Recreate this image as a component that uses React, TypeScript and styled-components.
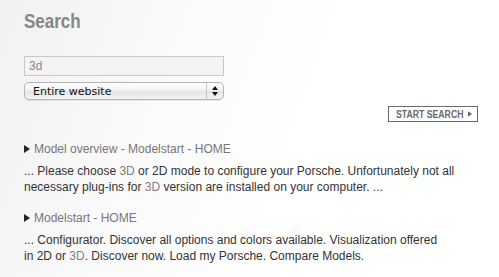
import styled, { createGlobalStyle } from "styled-components";

const GlobalStyle = createGlobalStyle`
  html, body {
    margin: 0;
    padding: 0;
  }
  body {
    width: 499px;
    height: 277px;
    overflow: hidden;
    background: linear-gradient(110deg, #f1f1f1 0%, #fbfbfb 35%, #ffffff 60%);
    font-family: "Liberation Sans", Arial, sans-serif;
  }
`;

const Page = styled.div`
  padding: 8px 21px 0 24px;
`;

const Title = styled.h1`
  margin: 0;
  height: 26px;
  line-height: 26px;
  display: inline-block;
  transform: scaleX(0.85);
  transform-origin: left center;
  font-family: "Liberation Sans", Arial, sans-serif;
  font-size: 20px;
  font-weight: bold;
  color: #878787;
`;

const Form = styled.form`
  margin-top: 22px;
  display: flex;
  flex-direction: column;
`;

const Field = styled.input`
  box-sizing: border-box;
  width: 200px;
  height: 20px;
  margin: 0;
  padding: 0 4px;
  border: 1px solid #c8c8c8;
  background: #f3f3f3;
  font-family: "Liberation Sans", Arial, sans-serif;
  font-size: 12px;
  color: #888;
  outline: none;
`;

const Select = styled.div`
  box-sizing: border-box;
  position: relative;
  width: 200px;
  height: 18px;
  margin-top: 6px;
  display: flex;
  align-items: center;
  padding-left: 8px;
  border: 1px solid #b4b4b4;
  border-radius: 5px;
  background: linear-gradient(#ffffff, #f1f1f1 50%, #e4e4e4 51%, #f4f4f4);
  box-shadow: 0 1px 0 rgba(0, 0, 0, 0.08);
  font-family: "DejaVu Sans", "Liberation Sans", sans-serif;
  font-size: 11px;
  color: #111;
`;

const Stepper = styled.span`
  position: absolute;
  right: 0;
  top: 0;
  bottom: 0;
  width: 16px;
  border-left: 1px solid #c6c6c6;
  display: flex;
  align-items: center;
  justify-content: center;
`;

const Actions = styled.div`
  display: flex;
  justify-content: flex-end;
  margin-top: 6px;
`;

const SubmitButton = styled.button`
  box-sizing: border-box;
  height: 16px;
  width: 90px;
  margin: 0;
  padding: 0 0 0 7px;
  display: flex;
  align-items: center;
  white-space: nowrap;
  overflow: hidden;
  border: 1px solid #6a6a6a;
  background: #fff;
  font-family: "Liberation Sans", Arial, sans-serif;
  font-size: 11px;
  font-weight: bold;
  color: #6a6a6a;
  cursor: pointer;
`;

const ButtonLabel = styled.span`
  display: inline-block;
  transform: scaleX(0.79);
  transform-origin: left center;
  margin-right: -13px;
`;

const Results = styled.ul`
  list-style: none;
  margin: 19px 0 0;
  padding: 0;
`;

const Result = styled.li`
  margin-bottom: 15px;
`;

const ResultLink = styled.a`
  display: flex;
  align-items: center;
  gap: 4px;
  height: 16px;
  font-size: 12px;
  color: #777;
  text-decoration: none;
`;

const Snippet = styled.p`
  margin: 6px 0 0;
  font-size: 12px;
  line-height: 16px;
  color: #333;
`;

const Hit = styled.span`
  color: #808080;
`;

function Triangle({ size = 6, color = "#222" }: { size?: number; color?: string }) {
  return (
    <svg width={size} height={size + 2} viewBox="0 0 6 8">
      <path d="M0 0 L6 4 L0 8 Z" fill={color} />
    </svg>
  );
}

export default function App() {
  return (
    <>
      <GlobalStyle />
      <Page>
        <Title>Search</Title>
        <Form onSubmit={(e) => e.preventDefault()}>
          <Field defaultValue="3d" />
          <Select>
            Entire website
            <Stepper>
              <svg width="6" height="10" viewBox="0 0 6 10">
                <path d="M0 4 L3 0 L6 4 Z M0 6 L3 10 L6 6 Z" fill="#111" />
              </svg>
            </Stepper>
          </Select>
          <Actions>
            <SubmitButton type="submit">
              <ButtonLabel>START SEARCH</ButtonLabel>
              <Triangle size={4} color="#6a6a6a" />
            </SubmitButton>
          </Actions>
        </Form>
        <Results>
          <Result>
            <ResultLink href="#">
              <Triangle />
              Model overview - Modelstart - HOME
            </ResultLink>
            <Snippet>
              ... Please choose <Hit>3D</Hit> or 2D mode to configure your Porsche. Unfortunately not all
              <br />
              necessary plug-ins for <Hit>3D</Hit> version are installed on your computer. ...
            </Snippet>
          </Result>
          <Result>
            <ResultLink href="#">
              <Triangle />
              Modelstart - HOME
            </ResultLink>
            <Snippet>
              ... Configurator. Discover all options and colors available. Visualization offered
              <br />
              in 2D or <Hit>3D</Hit>. Discover now. Load my Porsche. Compare Models.
            </Snippet>
          </Result>
        </Results>
      </Page>
    </>
  );
}
